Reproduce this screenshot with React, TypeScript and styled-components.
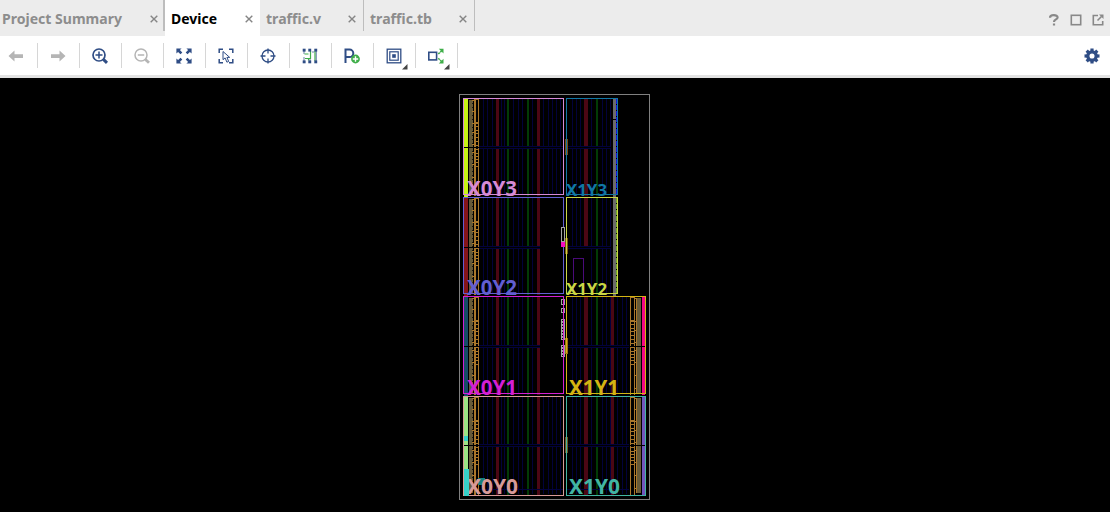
import React from 'react';
import styled, { createGlobalStyle } from 'styled-components';

const GlobalStyle = createGlobalStyle`
  * { box-sizing: border-box; }
  body { margin: 0; background: #000; font-family: 'Noto Sans', 'Open Sans', sans-serif; }
`;

const Window = styled.div`
  display: flex;
  flex-direction: column;
  width: 1110px;
  height: 512px;
  overflow: hidden;
  background: #000;
`;

const TabBar = styled.div`
  display: flex;
  flex: 0 0 36px;
  background: #ececec;
`;

const Tab = styled.div<{ $width: number; $pad: number; $end: number; $active?: boolean; $edge?: number }>`
  display: flex;
  align-items: flex-start;
  justify-content: space-between;
  width: ${(p) => p.$width}px;
  padding: 0 ${(p) => p.$end}px 0 ${(p) => p.$pad}px;
  background-color: ${(p) => (p.$active ? '#fff' : '#ececec')};
  color: ${(p) => (p.$active ? '#000' : '#8d8d8d')};
  background-image: linear-gradient(#bdbdbd, #bdbdbd);
  background-size: ${(p) => p.$edge ?? 0}px 31px;
  background-position: right top;
  background-repeat: no-repeat;
`;

const Title = styled.svg`
  display: block;
  height: 36px;
  font: 700 14.3px 'Noto Sans', 'Open Sans', sans-serif;
  overflow: visible;
`;

const CloseMark = styled.svg`
  width: 8px;
  height: 8px;
  margin-top: 15px;
  flex: none;
`;

const WindowButtons = styled.div`
  display: flex;
  align-items: center;
  gap: 10px;
  margin-left: auto;
  padding: 4px 6px 0 0;
`;

const Toolbar = styled.div`
  display: flex;
  align-items: center;
  flex: 0 0 42px;
  background: #fff;
  border-bottom: 3px solid #e3e3e3;
`;

const Tool = styled.div<{ $first?: boolean }>`
  display: flex;
  align-items: center;
  justify-content: center;
  width: ${(p) => (p.$first ? 38 : 42)}px;
  height: 25px;
  border-right: 1px solid #d6d6d6;
  padding-right: ${(p) => (p.$first ? 5 : 1)}px;
`;

const Icon = styled.svg`
  width: 24px;
  height: 24px;
  overflow: visible;
  flex: none;
`;

const Settings = styled.div`
  display: flex;
  margin-left: auto;
  padding-right: 6px;
`;

const Canvas = styled.div`
  display: flex;
  flex: 1;
  justify-content: center;
  background: #000;
`;

const Die = styled.svg`
  width: 1110px;
  height: 434px;
  font-family: 'Noto Sans', 'Open Sans', sans-serif;
`;

const BLUE = '#2f4d85';
const GREY = '#b5b5b5';
const GREEN = '#3fae49';

const Close = () => (
  <CloseMark viewBox="0 0 8 8">
    <path d="M.7 .7L7.3 7.3M7.3 .7L.7 7.3" stroke="#858585" strokeWidth="1.4" fill="none" />
  </CloseMark>
);

const tabs = [
  { label: 'Project Summary', text: 120, width: 165, pad: 2, end: 7, edge: 2 },
  { label: 'Device', text: 46, width: 95, pad: 6, end: 7, active: true },
  { label: 'traffic.v', text: 55, width: 104, pad: 6, end: 8, edge: 1 },
  { label: 'traffic.tb', text: 62, width: 111, pad: 6, end: 8, edge: 1 },
];

const Corner = () => <path d="M25.5 20v5.5H20z" fill="#444" />;

const icons: React.ReactNode[] = [
  <path d="M4.5 12l6-5.5v3.7H19v3.8h-8.5v3.5z" fill={GREY} />,
  <path d="M19.5 12l-6-5.5v3.7H5v3.8h8.5v3.5z" fill={GREY} />,
  <g stroke={BLUE} fill="none" strokeWidth="1.7">
    <circle cx="11" cy="11" r="6" /><path d="M7.5 11h7M11 7.5v7" strokeWidth="1.5" />
    <path d="M15.4 15.4l3.6 3.4" strokeWidth="3" />
  </g>,
  <g stroke={GREY} fill="none" strokeWidth="1.5">
    <circle cx="11" cy="11" r="6" /><path d="M7.8 11h6.4" />
    <path d="M15.4 15.4l3.6 3.4" strokeWidth="2.8" />
  </g>,
  <g fill={BLUE}>
    {[0, 90, 180, 270].map((r) => (
      <path key={r} transform={`rotate(${r} 12 12)`} d="M4.4 4.4h5.2L7.9 6.1l2.4 2.4-1.8 1.8-2.4-2.4-1.7 1.7z" />
    ))}
  </g>,
  <g stroke={BLUE} fill="none" strokeWidth="1.5">
    <path d="M9 5.2H5.2V9M15 5.2h3.8V9M9 18.8H5.2V15M15 18.8h3.8V15" />
    <path d="M9 7.5v8.2l2.1-1.8 1.8 4.3 1.8-.8-1.8-4h2.8z" strokeWidth="1" />
  </g>,
  <g stroke={BLUE} fill="none" strokeWidth="1.3">
    <circle cx="12" cy="12" r="6" /><path d="M12 4.5v5M12 14.5v5M4.5 12h5M14.5 12h5" />
  </g>,
  <g>
    <path d="M6.5 10h4M12.5 7v7.5H7M10.5 16.5v-2M17 7v10" stroke={GREEN} fill="none" strokeWidth="1.2" />
    <path d="M6 7v3M6 13v4M18.3 7v10M15 7v2M12 15v2" stroke={BLUE} strokeWidth=".7" />
    {[4.7, 10.3, 16.3].map((x) => (
      <g key={x} fill={BLUE}><rect x={x} y="4.7" width="2.9" height="2.9" /><rect x={x} y="16.4" width="2.9" height="2.9" /></g>
    ))}
  </g>,
  <g fill="none">
    <path d="M5.5 19V5.5h4a3.7 3.7 0 0 1 0 7.6h-4" stroke={BLUE} strokeWidth="2" />
    <circle cx="15.5" cy="15" r="4.4" fill={GREEN} /><path d="M12.8 15h5.4M15.5 12.3v5.4" stroke="#fff" strokeWidth="1.4" />
  </g>,
  <g fill="none" stroke={BLUE}>
    <rect x="5.2" y="5.2" width="13.6" height="13.6" strokeWidth="1.3" />
    <rect x="7.8" y="7.8" width="8.4" height="8.4" strokeWidth="1.2" />
    <rect x="10.2" y="10.2" width="3.6" height="3.6" fill={BLUE} stroke="none" /><g stroke="none"><Corner /></g>
  </g>,
  <g fill="none">
    <rect x="4.8" y="8.3" width="7.8" height="7.6" stroke={BLUE} strokeWidth="1.6" />
    <path d="M14.3 10L18 6.5M14.3 14.3L18 18" stroke={GREEN} strokeWidth="1.5" strokeDasharray="2 .6" />
    <path d="M14.8 4.8H19.5v4.6zM14.8 19.4H19.5v-4.6z" fill={GREEN} /><Corner />
  </g>,
];

const TEETH = [0, 45, 90, 135, 180, 225, 270, 315];

interface Region { x: number; y: number; w: number; h: number; color: string; label: string; tx: number; tw: number; size: number }

const regions: Region[] = [
  { x: 463, y: 98, w: 100, h: 96, color: '#d68ad6', label: 'X0Y3', tx: 467, tw: 50, size: 20.5 },
  { x: 566, y: 98, w: 51, h: 96, color: '#1177a5', label: 'X1Y3', tx: 566, tw: 41, size: 16.5 },
  { x: 463, y: 197, w: 100, h: 96, color: '#625ed2', label: 'X0Y2', tx: 467, tw: 50, size: 20.5 },
  { x: 566, y: 197, w: 51, h: 96, color: '#c9d744', label: 'X1Y2', tx: 566, tw: 41, size: 16.5 },
  { x: 463, y: 296, w: 100, h: 97, color: '#d41fd4', label: 'X0Y1', tx: 467, tw: 50, size: 20.5 },
  { x: 566, y: 296, w: 79, h: 97, color: '#d3b413', label: 'X1Y1', tx: 569, tw: 50, size: 20.5 },
  { x: 463, y: 396, w: 100, h: 99, color: '#d79a98', label: 'X0Y0', tx: 467, tw: 51, size: 20.5 },
  { x: 566, y: 396, w: 79, h: 99, color: '#42b5a2', label: 'X1Y0', tx: 569, tw: 51, size: 20.5 },
];

const rows = [
  { y: 98, h: 98, mid: 49, strip: '#c8f514' },
  { y: 197, h: 98, mid: 50, strip: '#861519' },
  { y: 296, h: 99, mid: 50, strip: '#164c67' },
  { y: 396, h: 99, mid: 49, strip: '#9be484' },
];

const NAVY = '#02023b';
const ORANGE = '#aa772b';
const OLIVE = '#675a38';
const leftNets = [483, 487, 492, 501, 504, 513, 518, 522, 532];
const innerNets = [543, 548, 552, 556, 560];
const rightNets = [572, 576, 580, 591, 602, 606, 610];
const denseRungs = [24, 25, 28, 32, 35, 39, 43, 47, 51, 55, 58, 61, 64, 68];
const sparseRungs = [2, 13, 25, 34, 46, 54, 66, 79, 92];

const IoLadder = ({ y, h }: { y: number; h: number }) => (
  <g fill={ORANGE}>
    <rect x="469" y={y + 2} width="4" height={h - 4} fill={OLIVE} />
    <path d={`M472.5 ${y + 5}V${y + h - 2}`} stroke="#171611" strokeDasharray="1 3" />
    <rect x="474" y={y + 1} width="2" height={h - 1} />
    <rect x="478" y={y + 1} width="1" height={h - 1} />
    {sparseRungs.map((r) => <rect key={r} x="472" y={y + r} width="3" height="1" />)}
    {denseRungs.map((r) => <rect key={r} x="475" y={y + r} width="4" height="1" />)}
    <rect x="475" y={y + 1} width="4" height="1" />
  </g>
);

const RightLadder = ({ y, h }: { y: number; h: number }) => (
  <g fill={ORANGE}>
    <rect x="637" y={y + 2} width="4" height={h - 4} fill={OLIVE} />
    {[630, 634].map((x) => <rect key={x} x={x} y={y + 1} width="1" height={h - 1} />)}
    <rect x="636" y={y + 2} width="1" height={h - 4} />
    {sparseRungs.map((r) => <rect key={r} x="635" y={y + r} width="2" height="1" />)}
    {denseRungs.map((r) => <rect key={r} x="630" y={y + r} width="4" height="1" />)}
    <rect x="630" y={y + 1} width="5" height="1" />
  </g>
);

const Row = ({ y, h, mid, strip, index }: { y: number; h: number; mid: number; strip: string; index: number }) => {
  const wide = index > 1;
  const full = index === 0 || index === 3;
  return (
    <g>
      {[...leftNets, ...(full ? innerNets : []), ...rightNets, ...(wide ? [617, 622, 626] : [])].map((x) => (
        <rect key={x} x={x} y={y + 1} width="1" height={h - 2} fill={NAVY} />
      ))}
      {[[496, 3], [537, 3], [584, 4], ...(wide ? [[611, 3]] : [])].map(([x, w]) => (
        <rect key={x} x={x} y={y + 1} width={w} height={h - 1} fill="#4b0714" />
      ))}
      {[507, 527, 596].map((x) => <rect key={x} x={x} y={y + 1} width="2" height={h - 1} fill="#033b06" />)}
      <IoLadder y={y} h={h} />
      {wide && <RightLadder y={y} h={h} />}
      <rect x="464" y={y + 1} width="4" height={h} fill={strip} />
      {wide && <rect x="642" y={y + 1} width="3" height={h - 1} fill={index === 2 ? '#f50683' : '#7255bd'} />}
      {!wide && (
        <g>
          <rect x="613" y={y + 1} width="3" height={h} fill="#6b6b6b" />
          {index === 0 && <rect x="613" y="119" width="3" height="1" fill="#000" />}
          <path d={`M616.5 ${y + 1}V${y + h - 2}`} stroke={index ? '#6da52c' : '#1115e0'} strokeDasharray="5 1" />
        </g>
      )}
      <rect x="464" y={y + mid} width={wide ? 181 : 149} height="1" fill="#000" />
      {[mid - 1, mid + 1].map((d) => (
        <g key={d} fill={NAVY}>
          <rect x="479" y={y + d} width={full ? 84 : 61} height="1" />
          <rect x="567" y={y + d} width={wide ? 62 : 44} height="1" />
        </g>
      ))}
    </g>
  );
};

const Site = ({ y, h }: { y: number; h: number }) => (
  <rect x="561.5" y={y + 0.5} width="3" height={h} fill="#000" stroke="#a4a4a4" />
);

const markers = [
  { y: 139, color: '#7a4a12' },
  { y: 238, color: '#7f5a12' },
  { y: 338, color: '#9a7210' },
  { y: 437, color: '#6b5420' },
];

const Floorplan = () => (
  <Die viewBox="0 78 1110 434" shapeRendering="crispEdges">
    <rect x="459.5" y="94.5" width="190" height="405" fill="none" stroke="#808080" />
    {rows.map((r, i) => <Row key={r.y} {...r} index={i} />)}
    <rect x="572" y="249" width="16" height="46" fill="#000" />
    <path d="M573.5 295V258.5h10V295" fill="none" stroke="#4a0a7a" />
    <rect x="464" y="436" width="4" height="5" fill="#36d1c9" />
    <rect x="478" y="478" width="7" height="7" fill="#16807f" />
    <rect x="479" y="489" width="84" height="1" fill={NAVY} />
    <rect x="567" y="489" width="62" height="1" fill={NAVY} />
    {regions.map((r) => (
      <g key={r.label}>
        <rect x={r.x + 0.5} y={r.y + 0.5} width={r.w} height={r.h} fill="none" stroke={r.color} />
        <text x={r.tx} y={r.y + r.h + (r.y === 396 ? -1 : 2)} fontSize={r.size} fontWeight="700" textLength={r.tw} lengthAdjust="spacingAndGlyphs" fill={r.color}>{r.label}</text>
      </g>
    ))}
    <rect x="464" y="469" width="5" height="27" fill="#36d1c9" />
    {markers.map((m) => <rect key={m.y} x="565" y={m.y} width="3" height="16" fill={m.color} />)}
    {regions.filter((r) => r.x === 566).map((r) => <rect key={r.y} x="566" y={r.y + 41} width="1" height="16" fill={r.color} />)}
    <Site y={227} h={14} />
    <rect x="561" y="242" width="4" height="5" fill="#f70bc2" />
    <Site y={299} h={5} />
    <Site y={308} h={4} />
    {[319, 322, 325, 328, 331, 334, 337, 345, 348, 351, 354].map((y) => <Site key={y} y={y} h={2} />)}
    <rect x="563" y="297" width="1" height="96" fill="#d41fd4" />
  </Die>
);

export default function App() {
  return (
    <Window>
      <GlobalStyle />
      <TabBar>
        {tabs.map((t) => (
          <Tab key={t.label} $width={t.width} $pad={t.pad} $end={t.end} $active={t.active} $edge={t.edge}>
            <Title width={t.text}>
              <text y="24" textLength={t.text} lengthAdjust="spacingAndGlyphs" fill="currentColor">{t.label}</text>
            </Title>
            <Close />
          </Tab>
        ))}
        <WindowButtons>
          <svg width="12" height="12" viewBox="0 0 12 12"><path d="M2 3.7C2 .3 9.8 .4 9.6 3.5 9.5 5.6 6 5.3 6 8M6 9.5v2" fill="none" stroke="#888" strokeWidth="2.2" /></svg>
          <svg width="12" height="12" viewBox="0 0 12 12"><rect x="1.3" y="1.3" width="9.4" height="9.4" fill="none" stroke="#888" strokeWidth="1.6" /></svg>
          <svg width="12" height="12" viewBox="0 0 12 12"><path d="M6 1.5H1.3v9.2h9.4V7M5.5 6.5l4-4" fill="none" stroke="#888" strokeWidth="1.6" /><path d="M7 .5h4.5V5z" fill="#888" /></svg>
        </WindowButtons>
      </TabBar>
      <Toolbar>
        {icons.map((icon, i) => (
          <Tool key={i} $first={i === 0}><Icon viewBox="0 0 24 24">{icon}</Icon></Tool>
        ))}
        <Settings>
          <Icon viewBox="0 0 24 24">
            {TEETH.map((a) => <rect key={a} x="10.4" y="4.5" width="3.2" height="4" fill={BLUE} transform={`rotate(${a} 12 12)`} />)}
            <circle cx="12" cy="12" r="4.2" fill="none" stroke={BLUE} strokeWidth="3.3" />
          </Icon>
        </Settings>
      </Toolbar>
      <Canvas><Floorplan /></Canvas>
    </Window>
  );
}
